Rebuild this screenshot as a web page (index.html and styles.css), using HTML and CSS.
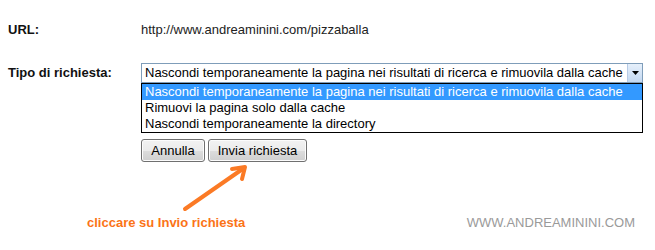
FILE: index.html
```html
<!DOCTYPE html>
<html>
<head>
<meta charset="utf-8">
<link rel="stylesheet" href="styles.css">
</head>
<body>
<div class="page">
  <div class="form">
    <div class="label">URL:</div>
    <div class="value">http://www.andreaminini.com/pizzaballa</div>
    <div class="label label-select">Tipo di richiesta:</div>
    <div class="field">
      <div class="select">
        <span class="select-text">Nascondi temporaneamente la pagina nei risultati di ricerca e rimuovila dalla cache</span>
        <span class="select-btn">
          <svg width="7" height="4" viewBox="0 0 7 4"><path d="M0 0H7L3.5 4Z" fill="#000"/></svg>
        </span>
      </div>
      <ul class="options">
        <li class="option selected">Nascondi temporaneamente la pagina nei risultati di ricerca e rimuovila dalla cache</li>
        <li class="option">Rimuovi la pagina solo dalla cache</li>
        <li class="option">Nascondi temporaneamente la directory</li>
      </ul>
      <div class="buttons">
        <button class="btn btn-cancel">Annulla</button>
        <button class="btn btn-send">Invia richiesta</button>
      </div>
    </div>
  </div>
  <div class="footer">
    <span class="caption">cliccare su Invio richiesta</span>
    <span class="watermark">WWW.ANDREAMININI.COM</span>
  </div>
  <svg class="arrow" width="655" height="250" viewBox="0 0 655 250">
    <g stroke="#fb7a25" stroke-width="4" stroke-linecap="round" stroke-linejoin="round" fill="none">
      <path d="M185 209L244 168"/>
      <path d="M232 169L245 167L242 179"/>
    </g>
  </svg>
</div>
</body>
</html>
```
FILE: styles.css
```css
html, body {
  margin: 0;
  padding: 0;
  background: #fff;
}
.page {
  position: relative;
  width: 655px;
  height: 250px;
  font-family: "Liberation Sans", Arial, sans-serif;
  font-size: 13px;
  color: #111;
  box-sizing: border-box;
  padding: 22px 0 0 8px;
}
.form {
  display: grid;
  grid-template-columns: 133px 502px;
  row-gap: 25px;
}
.label {
  font-weight: bold;
  line-height: 16px;
}
.label-select {
  padding-top: 2px;
}
.value {
  line-height: 16px;
  color: #222;
}
.field {
  display: flex;
  flex-direction: column;
}
.select {
  box-sizing: border-box;
  height: 20px;
  border: 1px solid #7f9db9;
  display: flex;
  align-items: center;
  justify-content: space-between;
  padding-left: 3px;
  background: #fff;
}
.select-text {
  line-height: 16px;
  color: #000;
  white-space: nowrap;
}
.select-btn {
  box-sizing: border-box;
  width: 15px;
  height: 18px;
  border-left: 1px solid #b7cbe6;
  background: linear-gradient(#e6f0fb, #c3d8f1);
  display: flex;
  align-items: center;
  justify-content: center;
}
.options {
  list-style: none;
  margin: 0;
  padding: 0;
  border: 1px solid #000;
}
.option {
  line-height: 16px;
  height: 16px;
  padding-left: 3px;
  white-space: nowrap;
  color: #000;
}
.option.selected {
  background: #3399ff;
  color: #fff;
}
.buttons {
  display: flex;
  gap: 3px;
  margin-top: 6px;
}
.btn {
  box-sizing: border-box;
  height: 23px;
  padding: 0;
  font-family: "Liberation Sans", Arial, sans-serif;
  font-size: 13px;
  color: #000;
  border: 1px solid #707070;
  border-radius: 3px;
  background: linear-gradient(#f2f2f2 0%, #ebebeb 50%, #dddddd 51%, #cfcfcf 100%);
  box-shadow: inset 0 0 0 1px #fcfcfc;
}
.btn-cancel {
  width: 64px;
}
.btn-send {
  width: 99px;
}
.footer {
  display: flex;
  align-items: center;
  margin-top: 53px;
  padding-left: 79px;
  padding-right: 20px;
}
.caption {
  color: #fb7317;
  font-weight: bold;
  font-size: 13px;
  line-height: 16px;
}
.watermark {
  margin-left: auto;
  color: #9a9a9a;
  font-size: 13px;
  line-height: 16px;
}
.arrow {
  position: absolute;
  left: 0;
  top: 0;
  pointer-events: none;
}
```
